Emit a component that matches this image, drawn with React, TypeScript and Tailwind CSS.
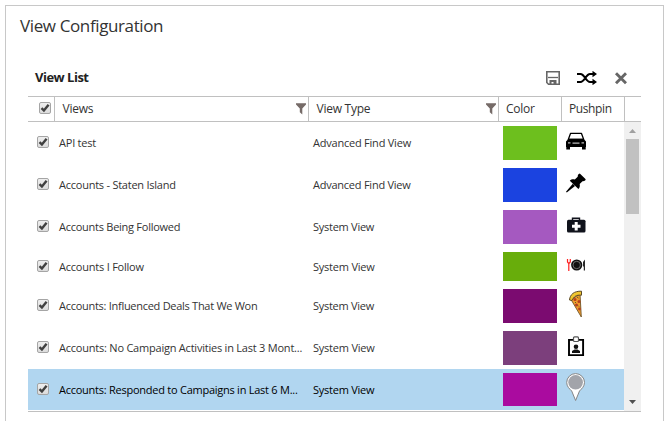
import type { ReactNode } from 'react';

const CarIcon = () => (
  <svg className="mt-[6px] block h-[19px] w-5" viewBox="0 0 20 19">
    <path d="M4.6 1.300h10.800l2.300 6.200H2.300z" fill="#fff" stroke="#000" strokeWidth="1.300" strokeLinejoin="round" />
    <path d="M2.500 6.800h15l2.500 2.700v5.500h-.3v2.500h-3.700V15H4v2.500H.3V15H0V9.500z" fill="#000" />
    <path d="M6.500 10.500h7v1.300h-7zM2 10.200h2.500v1.300H2zM15.500 10.200H18v1.300h-2.500z" fill="#bbb" />
  </svg>
);

const TackIcon = () => (
  <svg className="mt-[5px] block h-5 w-5" viewBox="0 0 20 20">
    <path d="M13.800.500 19.700 6.300c-.3 1.700-1.900 2.100-3.200 1.900l-2.800 2.700c.4 2 .1 3.800-1.300 5L3.800 7.800c1.400-1.500 3.100-1.800 5-1.300l2.900-2.800C11.700 2 12.400.900 13.800.500z" fill="#000" />
    <path d="m6.800 10.700 2.200 2.200L.8 19.600 0 18.800z" fill="#000" />
  </svg>
);

const KitIcon = () => (
  <svg className="mt-[7px] block h-4 w-5" viewBox="0 0 20 16">
    <path d="M6.500 4V1.200h7V4" fill="none" stroke="#10131c" strokeWidth="1.400" />
    <rect x="1" y="2.800" width="18.500" height="12.700" rx="1.500" fill="#10131c" />
    <path d="M8.700 5h3v2.800h2.800v3h-2.800v2.700h-3v-2.700H6v-3h2.700z" fill="#fff" />
  </svg>
);

const DiningIcon = () => (
  <svg className="mt-[7px] block h-3 w-5" viewBox="0 0 20 12">
    <path d="M1.500 0v3l1.300 1.500V12M4.300 0v3L2.900 4.500" fill="none" stroke="#ff2020" strokeWidth="1.200" />
    <circle cx="10.700" cy="6" r="5.600" fill="#111" />
    <circle cx="10.700" cy="6" r="3.700" fill="none" stroke="#aaa" strokeWidth=".6" />
    <path d="M18.900.5v11h-1.100v-4h-.7V3z" fill="#111" />
  </svg>
);

const PizzaIcon = () => (
  <svg className="mt-px block h-7 w-5" viewBox="0 0 20 28">
    <path d="M5 9.500 14 4l1.300 23z" fill="#f09a2c" stroke="#6f5527" strokeWidth=".9" />
    <path d="M3.500 10C4 4.500 8 .9 15.500 1.200v4C10 4.700 8 6.500 6 10.500z" fill="#f0c52f" stroke="#5c4a25" strokeWidth="1" />
    <g fill="#b43f20"><circle cx="9" cy="9.500" r="1.500" /><circle cx="13" cy="11.500" r="1.500" /><circle cx="10.500" cy="15" r="1.500" /><circle cx="13.500" cy="19" r="1.400" /></g>
    <path d="m11 7 1.500 1M9 12.500h1m2 3 1 1" stroke="#5d6223" />
  </svg>
);

const BadgeIcon = () => (
  <svg className="mt-[5px] block h-[21px] w-5" viewBox="0 0 20 21">
    <path d="M3 3.900h14.100v15.200H3z" fill="#fff" stroke="#000" strokeWidth="1.900" />
    <rect x="7.500" y=".9" width="5" height="4.600" rx="1" fill="#fff" stroke="#555" strokeWidth="1.200" />
    <circle cx="10" cy="10.700" r="2.300" fill="#111" />
    <path d="M6 16.900v-2l2.500-1.400h3l2.500 1.400v2z" fill="#111" />
  </svg>
);

const MarkerIcon = () => (
  <svg className="block h-7 w-5" viewBox="0 0 20 28">
    <path d="M.7 9.500a8.900 8.900 0 0 1 17.800 0c0 4-2.900 6.300-5 8.500L9.600 27.500 5.700 18C3.500 15.800.7 13.500.7 9.500z" fill="#fff" stroke="#858585" />
    <circle cx="9.600" cy="9.300" r="7.300" fill="#a2a4aa" />
  </svg>
);

type Row = { name: string; type: string; color: string; height: string; icon: ReactNode; track: string };

const rows: Row[] = [
  { name: 'API test', type: 'Advanced Find View', color: 'bg-[#6dbf1e]', height: 'h-[42px]', icon: <CarIcon />, track: 'tracking-[-0.22px]' },
  { name: 'Accounts - Staten Island', type: 'Advanced Find View', color: 'bg-[#1b43e0]', height: 'h-[42px]', icon: <TackIcon />, track: 'tracking-[-0.24px]' },
  { name: 'Accounts Being Followed', type: 'System View', color: 'bg-[#a559c0]', height: 'h-[42px]', icon: <KitIcon />, track: 'tracking-[-0.26px]' },
  { name: 'Accounts I Follow', type: 'System View', color: 'bg-[#68ad0b]', height: 'h-[37px]', icon: <DiningIcon />, track: 'tracking-[-0.22px] pt-[2px]' },
  { name: 'Accounts: Influenced Deals That We Won', type: 'System View', color: 'bg-[#7b0b70]', height: 'h-[42px]', icon: <PizzaIcon />, track: 'tracking-[-0.28px]' },
  { name: 'Accounts: No Campaign Activities in Last 3 Mont...', type: 'System View', color: 'bg-[#7c3f7c]', height: 'h-[42px]', icon: <BadgeIcon />, track: 'tracking-[-0.22px]' },
  { name: 'Accounts: Responded to Campaigns in Last 6 M...', type: 'System View', color: 'bg-[#aa0b9f]', height: 'h-[41px] bg-[#b1d6f0] text-black', icon: <MarkerIcon />, track: 'tracking-[-0.25px] pt-[2px]' },
];

const Check = () => (
  <span className="block h-3 w-3 shrink-0 rounded-[2px] border border-[#a5a5a5] bg-linear-to-b from-[#eeeeee] to-[#dcdcdc]">
    <svg viewBox="0 0 10 10" className="block h-[10px] w-[10px]">
      <path d="M1.500 5.200 3.900 7.500 8.600 1.700" fill="none" stroke="#404040" strokeWidth="2.400" />
    </svg>
  </span>
);

const Funnel = () => (
  <svg viewBox="0 0 10 12" className="h-3 w-[10px]">
    <path d="M0 .3h10v1.200L6.300 5.500v6L3.800 9.300V5.500L0 1.500z" fill="#766b68" />
  </svg>
);

export default function App() {
  return (
    <div className="h-[421px] w-[671px] overflow-hidden bg-white pl-[5px] pt-[5px] font-['Open_Sans','Noto_Sans',sans-serif] text-[#333333]">
      <div className="h-[430px] w-[659px] border border-[#c8c8c8] pl-[22px]">
        <h1 className="-ml-2 h-[54px] whitespace-nowrap pt-[8px] text-[17px] leading-[24px] tracking-[-0.38px]">View Configuration</h1>
        <div className="flex h-[36px] w-[613px] items-center pl-[7px] pr-[14px]">
          <h2 className="h-9 grow pt-[2px] text-[13px] font-bold leading-[30px] tracking-[-0.5px] text-[#222222]">View List</h2>
          <svg viewBox="0 0 14 14" className="mr-[17px] h-[14px] w-[14px]">
            <path d="M.8.800h12.400v12.400H2.500L.8 11.500z" fill="none" stroke="#666" strokeWidth="1.600" />
            <path d="M2 6.500h10" stroke="#666" strokeWidth="1.300" />
            <path d="M3.500 9h7v4.500H7.500V11H5.500v2.500h-2z" fill="#666" />
          </svg>
          <svg viewBox="0 0 20 14" className="mr-[17px] h-[14px] w-5">
            <path d="M0 3h3.500c4 0 5.500 8 9.500 8h4M0 11h3.500c4 0 5.500-8 9.500-8h4" fill="none" stroke="#000" strokeWidth="2.100" />
            <path d="m15.500-.2 4.500 3.200-4.500 3.200zM15.500 7.800 20 11l-4.500 3.200z" fill="#000" />
          </svg>
          <svg viewBox="0 0 13 13" className="h-[13px] w-[13px]">
            <path d="m2 1.300 10 10m0-10-10 10" stroke="#666" strokeWidth="2.900" />
          </svg>
        </div>
        <div className="flex h-[26px] w-[613px] border-y border-[#c0c0c0] text-[12px] leading-6 tracking-[-0.26px]">
          <div className="w-[27px] border-r border-[#c0c0c0] pl-[11px] pt-[5px]"><Check /></div>
          <div className="flex w-[254px] items-center justify-between border-r border-[#c0c0c0] pl-[7.500px] pr-[2px]"><span>Views</span><Funnel /></div>
          <div className="flex w-[190px] items-center justify-between border-r border-[#c0c0c0] pl-[7.500px] pr-[2px]"><span>View Type</span><Funnel /></div>
          <div className="w-[63px] border-r border-[#c0c0c0] pl-[7px]">Color</div>
          <div className="w-[63px] border-r border-[#c0c0c0] pl-[7px] tracking-[-0.4px]">Pushpin</div>
        </div>
        <div className="flex h-[290px] w-[613px] border-b border-[#c0c0c0]">
          <div className="w-[596px]">
            {rows.map((row) => (
              <div key={row.name} className={`flex ${row.height} text-[11px]`}>
                <div className="flex w-[31px] items-center pb-[2px] pl-[9px]"><Check /></div>
                <div className={`flex w-[254px] items-center whitespace-nowrap ${row.track}`}>{row.name}</div>
                <div className={`flex w-[190px] items-center whitespace-nowrap ${row.track}`}>{row.type}</div>
                <div className="w-[54px] py-[4px]"><div className={`h-full ${row.color}`} /></div>
                <div className="pl-[9px] pt-[4px]">{row.icon}</div>
              </div>
            ))}
          </div>
          <div className="flex w-[17px] flex-col items-center bg-[#f0f0f0]">
            <svg viewBox="0 0 17 17" className="h-[17px] w-[17px]"><path d="M5 11h7L8.500 7z" fill="#a0a0a0" /></svg>
            <div className="h-[75px] w-[13px] bg-[#c1c1c1]" />
            <svg viewBox="0 0 17 17" className="mt-auto h-[17px] w-[17px]"><path d="M5 6h7l-3.500 4z" fill="#505050" /></svg>
          </div>
        </div>
      </div>
    </div>
  );
}
